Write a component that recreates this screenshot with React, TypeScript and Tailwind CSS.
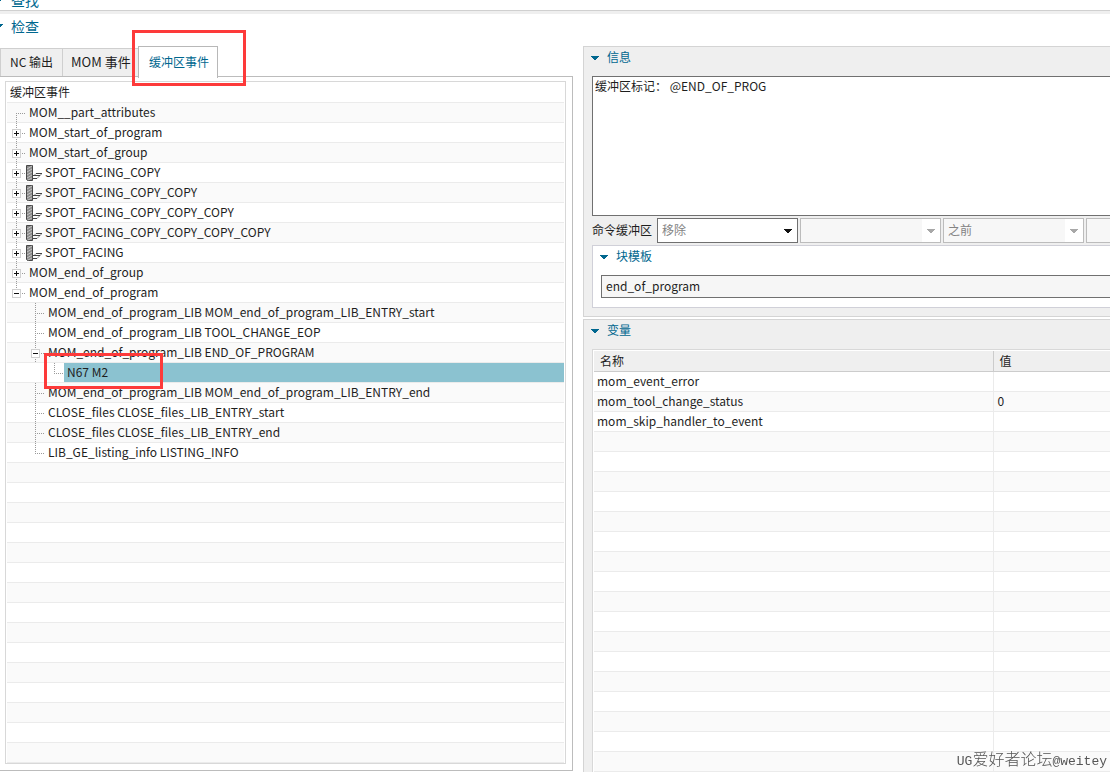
import clsx from "clsx";

type TreeRow = {
    label: string;
    depth: number;
    toggle?: "plus" | "minus";
    icon?: boolean;
    selected?: boolean;
    // vertical guide in the row's own column: full, top half or bottom half
    guide: "full" | "top" | "bottom";
};

const rows: TreeRow[] = [
    { label: "MOM__part_attributes", depth: 0, guide: "bottom" },
    { label: "MOM_start_of_program", depth: 0, toggle: "plus", guide: "full" },
    { label: "MOM_start_of_group", depth: 0, toggle: "plus", guide: "full" },
    { label: "SPOT_FACING_COPY", depth: 0, toggle: "plus", icon: true, guide: "full" },
    { label: "SPOT_FACING_COPY_COPY", depth: 0, toggle: "plus", icon: true, guide: "full" },
    { label: "SPOT_FACING_COPY_COPY_COPY", depth: 0, toggle: "plus", icon: true, guide: "full" },
    { label: "SPOT_FACING_COPY_COPY_COPY_COPY", depth: 0, toggle: "plus", icon: true, guide: "full" },
    { label: "SPOT_FACING", depth: 0, toggle: "plus", icon: true, guide: "full" },
    { label: "MOM_end_of_group", depth: 0, toggle: "plus", guide: "full" },
    { label: "MOM_end_of_program", depth: 0, toggle: "minus", guide: "top" },
    { label: "MOM_end_of_program_LIB MOM_end_of_program_LIB_ENTRY_start", depth: 1, guide: "full" },
    { label: "MOM_end_of_program_LIB TOOL_CHANGE_EOP", depth: 1, guide: "full" },
    { label: "MOM_end_of_program_LIB END_OF_PROGRAM", depth: 1, toggle: "minus", guide: "full" },
    { label: "N67 M2", depth: 2, selected: true, guide: "top" },
    { label: "MOM_end_of_program_LIB MOM_end_of_program_LIB_ENTRY_end", depth: 1, guide: "full" },
    { label: "CLOSE_files CLOSE_files_LIB_ENTRY_start", depth: 1, guide: "full" },
    { label: "CLOSE_files CLOSE_files_LIB_ENTRY_end", depth: 1, guide: "full" },
    { label: "LIB_GE_listing_info LISTING_INFO", depth: 1, guide: "top" },
];

const variables = [
    { name: "mom_event_error", value: "" },
    { name: "mom_tool_change_status", value: "0" },
    { name: "mom_skip_handler_to_event", value: "" },
];

const emptyTreeRows = Array.from({ length: 15 }, (_, i) => i);
const emptyVariableRows = Array.from({ length: 17 }, (_, i) => i);

function Caret({ className }: { className?: string }) {
    return (
        <svg viewBox="0 0 8 4" className={clsx("h-1 w-2 shrink-0", className)} fill="currentColor" shapeRendering="crispEdges">
            <path d="M0 0h8v1H7v1H6v1H5v1H3V3H2V2H1V1H0z" />
        </svg>
    );
}

function DrillIcon() {
    return (
        <svg viewBox="0 0 16 16" className="mt-[2px] mr-[3px] h-4 w-4 shrink-0" fill="none">
            <path d="M0.5 0.5h6v15h-5l-1-1z" fill="#8a8a8a" stroke="#484848" />
            <path d="M1 4l5-3M1 7l5-3M1 10l5-3M1 13l5-3M2 15l4-2" stroke="#c4c4c4" />
            <path d="M8 10.5L10 8.5H16L11 13.5H8" stroke="#888" />
            <path d="M7 10.5h7M7 13.5h4M10 8.5h6" stroke="#444" />
        </svg>
    );
}

function Guides({ row }: { row: TreeRow }) {
    return (
        <svg viewBox="0 0 17 20" className="h-5 w-[17px] shrink-0" fill="none" shapeRendering="crispEdges">
            {row.guide !== "bottom" && <path d="M7.5 0v10" stroke="#9a9a9a" strokeDasharray="1 1" />}
            {row.guide !== "top" && <path d="M7.5 10v10" stroke="#9a9a9a" strokeDasharray="1 1" />}
            <path d="M7 10.5h9" stroke="#9a9a9a" strokeDasharray="1 1" />
            {row.toggle && (
                <>
                    <rect x="3.5" y="6.5" width="8" height="8" fill="#fff" stroke="#d0d0d0" />
                    <path d="M5 10.5h5" stroke="#111" />
                    {row.toggle === "plus" && <path d="M7.5 8v5" stroke="#111" />}
                </>
            )}
        </svg>
    );
}

function TreeItem({ row }: { row: TreeRow }) {
    return (
        <li className="flex h-5 border-b border-[#ebebeb] pl-[2px] odd:bg-[#fafafa]">
            {row.depth > 0 && <span className="w-[19px] shrink-0" />}
            {row.depth > 1 && <span className="w-[19px] shrink-0" />}
            <Guides row={row} />
            <span
                className={clsx(
                    "flex min-w-0 flex-1 leading-[17px] whitespace-nowrap",
                    row.selected && "bg-[#8bc2d0]",
                    !row.icon && "pl-[3px]",
                )}
            >
                {row.icon && <DrillIcon />}
                {row.label}
            </span>
        </li>
    );
}

function SectionTitle({ title }: { title: string }) {
    return (
        <h2 className="-ml-px flex items-start gap-2 leading-5 text-[#00678f]">
            <Caret className="mt-[9px]" />
            {title}
        </h2>
    );
}

function Combo({ label, value, disabled }: { label: string; value: string; disabled?: boolean }) {
    return (
        <div
            className={clsx(
                "relative h-[25px] w-[141px] shrink-0 border",
                disabled ? "border-[#bcbcbc] bg-[#f7f7f7]" : "border-[#707070] bg-white",
            )}
        >
            <select
                aria-label={label}
                disabled={disabled}
                className="h-full w-full appearance-none pb-[2px] pl-1 text-[#838383] opacity-100"
            >
                <option>{value}</option>
            </select>
            <span
                className={clsx(
                    "pointer-events-none absolute inset-y-0 right-0 flex w-[18px] items-center justify-center bg-white",
                    disabled ? "text-[#a8a8a8]" : "text-[#111]",
                )}
            >
                <Caret />
            </span>
        </div>
    );
}

export default function App() {
    return (
        <main className="flex h-screen flex-col overflow-hidden bg-white font-['Noto_Sans_CJK_SC',sans-serif] text-[12px] leading-5 text-[#1e1e1e]">
            <div className="flex h-[11px] shrink-0 items-end gap-2 border-b border-[#d0d0d0] text-[14px] leading-5 text-[#00678f]">
                <Caret className="-ml-[5px] mb-2" />
                <span>查找</span>
            </div>
            <div className="h-[3px] shrink-0 bg-[#efefef]" />
            <div className="flex h-[26px] shrink-0 items-center gap-2 pb-[2px] text-[14px] text-[#00678f]">
                <Caret className="-ml-[5px]" />
                <h1>检查</h1>
            </div>

            <div className="flex min-h-0 flex-1">
                <section className="relative flex w-[573px] shrink-0 flex-col pt-[6px]">
                    <div role="tablist" className="flex h-[30px] shrink-0 items-end">
                        <button role="tab" className="h-7 w-[63px] shrink-0 border border-b-0 border-[#cfcfcf] bg-[#efefef] pb-[2px]">
                            NC 输出
                        </button>
                        <button role="tab" className="h-7 w-[75px] shrink-0 overflow-hidden border-t border-[#cfcfcf] bg-[#efefef] pb-[2px] pl-2 text-left text-[13px] whitespace-nowrap">
                            MOM 事件
                        </button>
                        <button
                            role="tab"
                            aria-selected="true"
                            className="relative z-10 -mb-[2px] h-8 w-20 shrink-0 border border-b-0 border-[#b8b8b8] bg-white pb-[2px] pl-[2px] text-[#00678f]"
                        >
                            缓冲区事件
                        </button>
                    </div>

                    <div className="mb-px flex min-h-0 flex-1 border-y border-r border-[#bcbcbc] pt-1 pr-[6px] pb-[6px] pl-[5px]">
                        <div className="min-w-0 flex-1 overflow-hidden border border-[#d8d8d8] px-px">
                            <div className="h-[21px] border-b border-[#ebebeb] pl-[3px] leading-5">缓冲区事件</div>
                            <ul>
                                {rows.map((row) => (
                                    <TreeItem key={row.label} row={row} />
                                ))}
                                {emptyTreeRows.map((i) => (
                                    <li key={i} className="h-5 border-b border-[#ebebeb] odd:bg-[#fafafa]" />
                                ))}
                            </ul>
                        </div>
                    </div>

                    {/* red callouts */}
                    <div className="pointer-events-none absolute -top-[10px] left-[132px] z-20 h-14 w-[114px] border-3 border-[#fd3a3a]" />
                    <div className="pointer-events-none absolute top-[313px] left-11 z-20 h-9 w-[119px] border-3 border-[#fd3a3a]" />
                </section>

                <div className="ml-[10px] flex min-w-0 flex-1 flex-col overflow-hidden pt-[6px]">
                    <section className="shrink-0 border border-r-0 border-[#d4d4d4] bg-[#efefef] pb-2 pl-2">
                        <SectionTitle title="信息" />
                        <textarea
                            aria-label="信息"
                            readOnly
                            defaultValue="缓冲区标记： @END_OF_PROG"
                            className="mt-[9px] block h-[140px] w-full resize-none border border-r-0 border-[#707070] bg-white px-[2px] leading-[18px]"
                        />
                        <div className="mt-[2px] flex items-center gap-[2px]">
                            <span className="w-[63px] shrink-0 pb-[2px]">命令缓冲区</span>
                            <Combo label="命令缓冲区" value="移除" />
                            <Combo label="缓冲区" value="" disabled />
                            <Combo label="位置" value="之前" disabled />
                            <Combo label="目标" value="" disabled />
                        </div>
                        <div className="mt-[2px] border border-r-0 border-[#d0d0d8] bg-white pb-[9px] pl-2">
                            <SectionTitle title="块模板" />
                            <input
                                aria-label="块模板"
                                readOnly
                                defaultValue="end_of_program"
                                className="mt-[9px] block h-[23px] w-full border border-r-0 border-[#707070] bg-[#f6f6f6] px-1 pb-[2px]"
                            />
                        </div>
                    </section>

                    <section className="mt-[2px] flex-1 border border-r-0 border-b-0 border-[#d4d4d4] bg-[#efefef] pl-2">
                        <SectionTitle title="变量" />
                        <div className="mt-[9px] border border-r-0 border-[#d8d8d8] bg-white pt-px pl-px">
                            <table className="w-full table-fixed border-collapse text-left leading-[17px]">
                                <colgroup>
                                    <col className="w-[399px]" />
                                    <col />
                                </colgroup>
                                <thead>
                                    <tr className="h-5 border-b border-[#cccccc] bg-[#efefef]">
                                        <th className="border-r border-[#cccccc] pl-[6px] font-normal">名称</th>
                                        <th className="pl-[6px] font-normal">值</th>
                                    </tr>
                                </thead>
                                <tbody>
                                    {variables.map((v) => (
                                        <tr key={v.name} className="h-5 border-b border-[#ebebeb] align-top even:bg-[#fafafa]">
                                            <td className="border-r border-[#ebebeb] pl-[3px]">{v.name}</td>
                                            <td className="pl-1">{v.value}</td>
                                        </tr>
                                    ))}
                                    {emptyVariableRows.map((i) => (
                                        <tr key={i} className="h-5 border-b border-[#ebebeb] even:bg-[#fafafa]">
                                            <td className="border-r border-[#ebebeb]" />
                                            <td />
                                        </tr>
                                    ))}
                                </tbody>
                            </table>
                        </div>
                    </section>
                </div>
            </div>

            <p className="pointer-events-none fixed right-[3px] bottom-0 font-['Liberation_Mono','Noto_Sans_CJK_SC',monospace] text-[13px] leading-5 text-[#555]">
                UG<span className="text-[16px] font-light">爱好者论坛</span>@weitey
            </p>
        </main>
    );
}
